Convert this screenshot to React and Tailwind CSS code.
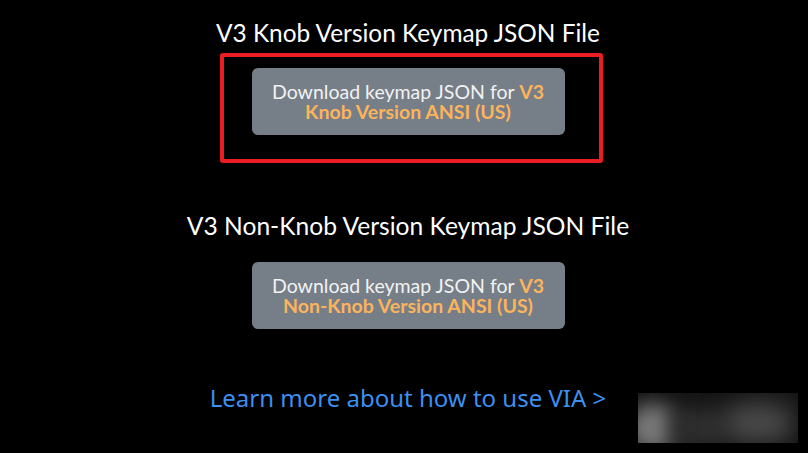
export default function App() {
  return (
    <div
      className="relative w-[808px] h-[453px] bg-black overflow-hidden flex flex-col items-center pl-[8px]"
      style={{ fontFamily: "Lato, 'Noto Sans', sans-serif" }}
    >
      <h2 className="mt-[19px] text-[24.4px] leading-[28px] text-white font-normal">
        V3 Knob Version Keymap JSON File
      </h2>
      <button className="mt-[21px] w-[313px] h-[67px] rounded-[6px] bg-[#767e88] text-[19.5px] leading-[19.5px] text-[#f2f2f2] px-3 text-center">
        Download keymap JSON for{" "}
        <span className="text-[#fbb45c] font-bold">V3 Knob Version ANSI (US)</span>
      </button>
      <h2 className="mt-[77px] text-[24.6px] leading-[28px] text-white font-normal">
        V3 Non-Knob Version Keymap JSON File
      </h2>
      <button className="mt-[22px] w-[313px] h-[67px] rounded-[6px] bg-[#767e88] text-[19.5px] leading-[19.5px] text-[#f2f2f2] px-3 text-center">
        Download keymap JSON for{" "}
        <span className="text-[#fbb45c] font-bold">V3 Non-Knob Version ANSI (US)</span>
      </button>
      <a
        href="#"
        className="mt-[55px] text-[24px] leading-[28px] text-[#3d8ff0]"
        style={{ fontFamily: "'Noto Sans', sans-serif" }}
      >
        Learn more about how to use VIA &gt;
      </a>

      <div className="absolute left-[220px] top-[53px] w-[383px] h-[110px] border-4 border-[#ec1c24] rounded-[3px]" />

      <div className="absolute left-[638px] top-[393px] w-[160px] h-[50px] overflow-hidden bg-[#141414]">
        <div className="absolute left-[-10px] top-[10px] w-[50px] h-[50px] rounded-full bg-[#7a7a7a] blur-[10px]" />
        <div className="absolute left-[30px] top-[15px] w-[60px] h-[40px] rounded-full bg-[#2e2e2e] blur-[10px]" />
        <div className="absolute left-[85px] top-[10px] w-[70px] h-[40px] rounded-full bg-[#4a4a4a] blur-[12px]" />
      </div>
    </div>
  );
}
